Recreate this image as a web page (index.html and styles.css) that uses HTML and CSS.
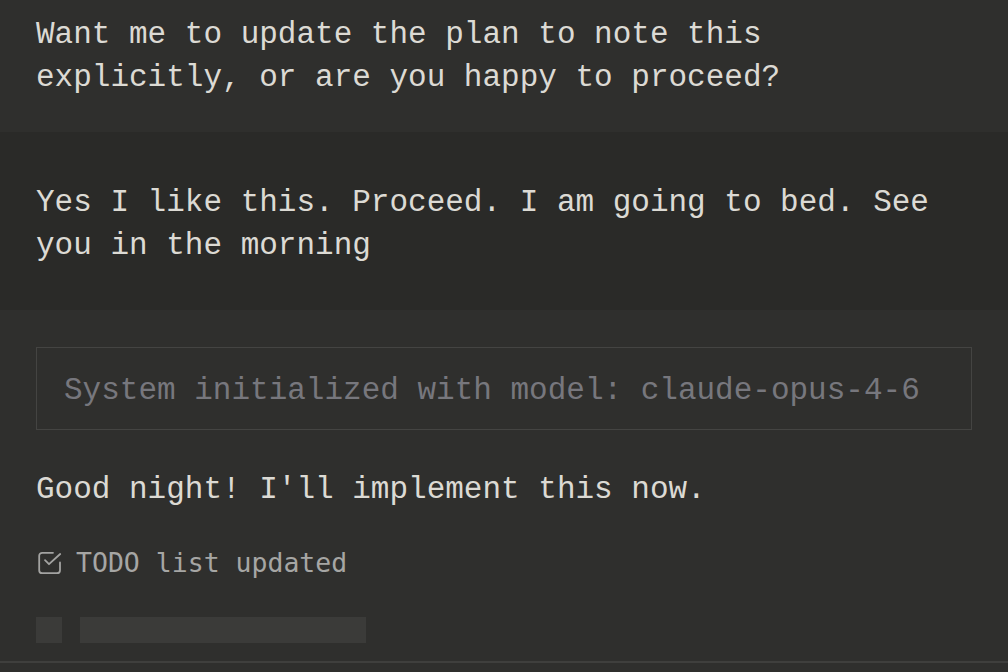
FILE: index.html
```html
<!DOCTYPE html>
<html lang="en">
<head>
<meta charset="utf-8">
<title>Chat</title>
<link rel="stylesheet" href="styles.css">
</head>
<body>
<div class="page">
  <section class="msg msg-assistant-top">
    <p class="text">Want me to update the plan to note this explicitly, or are you happy to proceed?</p>
  </section>
  <section class="msg msg-user">
    <p class="text">Yes I like this. Proceed. I am going to bed. See you in the morning</p>
  </section>
  <section class="msg msg-assistant">
    <div class="system-box">System initialized with model: claude-opus-4-6</div>
    <p class="text reply">Good night! I'll implement this now.</p>
    <div class="tool-row">
      <svg class="tool-icon" width="26" height="24" viewBox="0 0 26 24" fill="none" stroke="#a3a3a1" stroke-width="1.8" stroke-linecap="round" stroke-linejoin="round">
        <path d="M24 11.5V19.2a3 3 0 0 1-3 3H6.2a3 3 0 0 1-3-3V4.8a3 3 0 0 1 3-3H17"/>
        <path d="M9 9.2L13 13.2L24.2 3"/>
      </svg>
      <span class="tool-label">TODO list updated</span>
    </div>
    <div class="skeleton">
      <span class="sk-square"></span>
      <span class="sk-bar"></span>
    </div>
  </section>
  <div class="divider"></div>
</div>
</body>
</html>
```

FILE: styles.css
```css
html, body {
  margin: 0;
  padding: 0;
  background: #2f2f2d;
}
body {
  width: 1008px;
  height: 672px;
  overflow: hidden;
  font-family: "Liberation Mono", "DejaVu Sans Mono", monospace;
  color: #dcdad4;
}
.page {
  display: flex;
  flex-direction: column;
}
.msg {
  padding-left: 36px;
  padding-right: 36px;
}
.text {
  margin: 0;
  font-size: 31px;
  line-height: 43.4px;
  color: #dcdad4;
}
.msg-assistant-top {
  background: #2f2f2d;
  padding-top: 13px;
  padding-bottom: 32px;
}
.msg-user {
  background: #2a2a28;
  padding-top: 49px;
  padding-bottom: 42px;
}
.msg-assistant {
  background: #2f2f2d;
  padding-top: 37px;
  padding-bottom: 18px;
  display: flex;
  flex-direction: column;
}
.system-box {
  border: 1px solid #444442;
  padding: 21px 27px 17px;
  font-size: 31px;
  line-height: 43.4px;
  color: #77777d;
}
.reply {
  margin-top: 38px;
}
.tool-row {
  margin-top: 34px;
  display: flex;
  align-items: center;
  gap: 14px;
  height: 36px;
}
.tool-icon {
  flex: none;
  display: block;
}
.tool-label {
  font-family: "DejaVu Sans Mono", monospace;
  font-size: 26.5px;
  line-height: 36px;
  color: #a6a6a4;
}
.skeleton {
  margin-top: 36px;
  display: flex;
  gap: 18px;
  height: 26px;
}
.sk-square {
  width: 26px;
  height: 26px;
  background: #3b3b39;
}
.sk-bar {
  width: 286px;
  height: 26px;
  background: #3b3b39;
}
.divider {
  height: 2px;
  background: #3f3f3d;
}
```
